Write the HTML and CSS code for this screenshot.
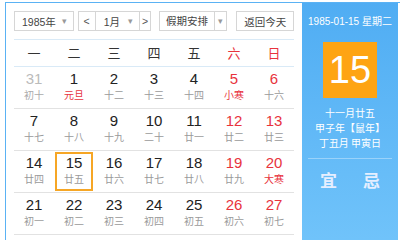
FILE: index.html
```html
<!DOCTYPE html>
<html lang="zh-CN">
<head>
    <meta charset="UTF-8">
    <title>万年历</title>
    <link rel="stylesheet" href="styles.css">
</head>
<body>
    <div class="calendar">
        <div class="main">
            <div class="toolbar">
                <div class="select year"><span>1985年</span><span class="caret">▾</span></div>
                <div class="month-group">
                    <span class="nav">&lt;</span>
                    <span class="month"><span>1月</span><span class="caret">▾</span></span>
                    <span class="nav next">&gt;</span>
                </div>
                <div class="select holiday"><span class="label">假期安排</span><span class="caret">▾</span></div>
                <div class="today-btn">返回今天</div>
            </div>

            <div class="weekdays">
                <span>一</span><span>二</span><span>三</span><span>四</span><span>五</span>
                <span class="weekend">六</span><span class="weekend">日</span>
            </div>

            <div class="days" id="days"></div>
        </div>

        <div class="side">
            <div class="side-date">1985-01-15 星期二</div>
            <div class="big-day">15</div>
            <div class="lunar-info">
                <div>十一月廿五</div>
                <div>甲子年【鼠年】</div>
                <div>丁丑月 甲寅日</div>
            </div>
            <div class="yi-ji">
                <span>宜</span><span>忌</span>
            </div>
        </div>
    </div>

    <script>
        // day, lunar text, flags: o = other month, w = weekend, f = festival / solar term, s = selected
        var days = [
            [31, '初十', 'o'], [1, '元旦', 'f'], [2, '十二'], [3, '十三'], [4, '十四'], [5, '小寒', 'wf'], [6, '十六', 'w'],
            [7, '十七'], [8, '十八'], [9, '十九'], [10, '二十'], [11, '廿一'], [12, '廿二', 'w'], [13, '廿三', 'w'],
            [14, '廿四'], [15, '廿五', 's'], [16, '廿六'], [17, '廿七'], [18, '廿八'], [19, '廿九', 'w'], [20, '大寒', 'wf'],
            [21, '初一'], [22, '初二'], [23, '初三'], [24, '初四'], [25, '初五'], [26, '初六', 'w'], [27, '初七', 'w']
        ];

        var html = '';
        days.forEach(function (d) {
            var flags = d[2] || '';
            var cls = 'day';
            if (flags.indexOf('o') > -1) cls += ' other';
            if (flags.indexOf('w') > -1) cls += ' weekend';
            if (flags.indexOf('f') > -1) cls += ' festival';
            if (flags.indexOf('s') > -1) cls += ' selected';
            html += '<div class="' + cls + '"><div class="num">' + d[0] + '</div><div class="lunar">' + d[1] + '</div></div>';
        });
        document.getElementById('days').innerHTML = html;
    </script>
</body>
</html>
```

FILE: styles.css
```css
body {
    margin: 0;
    background: #fff;
    font-family: "Liberation Sans", "Noto Sans CJK SC", sans-serif;
    color: #222;
    overflow: hidden;
}
.calendar {
    display: flex;
    margin: 2px 0 0 5px;
    border: 1px solid #5ab2f4;
    border-right: none;
    border-bottom: none;
    width: 394px;
    height: 237px;
}
.main {
    width: 280px;
    padding: 8px 8px 0 8px;
}
.toolbar {
    display: flex;
    height: 20px;
    font-size: 10.5px;
    color: #444;
}
.select,
.month-group,
.today-btn {
    border: 1px solid #d6d6d6;
    box-sizing: border-box;
    height: 20px;
    display: flex;
    align-items: center;
    background: #fff;
}
.caret {
    color: #999;
    font-size: 9px;
}
.year {
    width: 60px;
    padding-left: 7px;
    justify-content: space-between;
    padding-right: 6px;
}
.month-group {
    width: 74px;
    margin-left: 4px;
}
.nav {
    width: 16px;
    height: 18px;
    line-height: 18px;
    text-align: center;
    color: #555;
}
.nav.next {
    width: 10px;
    border-left: 1px solid #d6d6d6;
}
.month {
    flex: 1;
    height: 18px;
    display: flex;
    align-items: center;
    justify-content: space-between;
    padding: 0 6px 0 8px;
    border-left: 1px solid #d6d6d6;
}
.holiday {
    width: 69px;
    margin-left: 8px;
}
.holiday .label {
    width: 54px;
    height: 18px;
    line-height: 18px;
    text-align: center;
    border-right: 1px solid #d6d6d6;
}
.holiday .caret {
    flex: 1;
    text-align: center;
}
.today-btn {
    width: 58px;
    margin-left: 9px;
    justify-content: center;
}
.weekdays {
    display: grid;
    grid-template-columns: repeat(7, 40px);
    margin-top: 8px;
    border-top: 1px solid #d9eaf7;
    border-bottom: 1px solid #d9eaf7;
    height: 26px;
    line-height: 26px;
    text-align: center;
    font-size: 13px;
    color: #333;
    font-family: "Noto Sans CJK SC", sans-serif;
}
.weekdays .weekend {
    color: #e8333d;
}
.days {
    display: grid;
    grid-template-columns: repeat(7, 40px);
}
.day {
    height: 42px;
    border-bottom: 1px solid #e2e2e2;
    text-align: center;
    padding-top: 3px;
    box-sizing: border-box;
}
.day .num {
    font-size: 15px;
    line-height: 18px;
    color: #222;
}
.day .lunar {
    font-size: 10px;
    line-height: 14px;
    color: #9a9a9a;
    font-family: "Noto Sans CJK SC", sans-serif;
}
.day.weekend .num,
.day.festival .lunar {
    color: #e8333d;
}
.day.other .num {
    color: #bbb;
}
.day.other .lunar {
    color: #aaa;
}
.day.selected {
    box-shadow: inset 0 0 0 1px #fff, inset 0 0 0 3px #f6a625;
}
.side {
    width: 96px;
    background: linear-gradient(#50adf3, #70c3fa);
    color: #fff;
    text-align: center;
    font-family: "Noto Sans CJK SC", sans-serif;
}
.side-date {
    font-family: "Liberation Sans", "Noto Sans CJK SC", sans-serif;
    font-size: 10px;
    line-height: 12px;
    margin-top: 13px;
}
.big-day {
    width: 54px;
    height: 56px;
    margin: 14px auto 0;
    background: #fea413;
    font-family: "Liberation Sans", sans-serif;
    font-size: 38px;
    line-height: 56px;
}
.lunar-info {
    margin-top: 7px;
    font-size: 10px;
    line-height: 15px;
    padding-bottom: 8px;
    margin-left: 6px;
    margin-right: 6px;
    border-bottom: 1px solid rgba(255, 255, 255, 0.35);
}
.yi-ji {
    display: flex;
    justify-content: center;
    gap: 26px;
    margin-top: 10px;
    font-size: 17px;
    line-height: 22px;
    color: #e6efff;
    font-weight: bold;
}
```
